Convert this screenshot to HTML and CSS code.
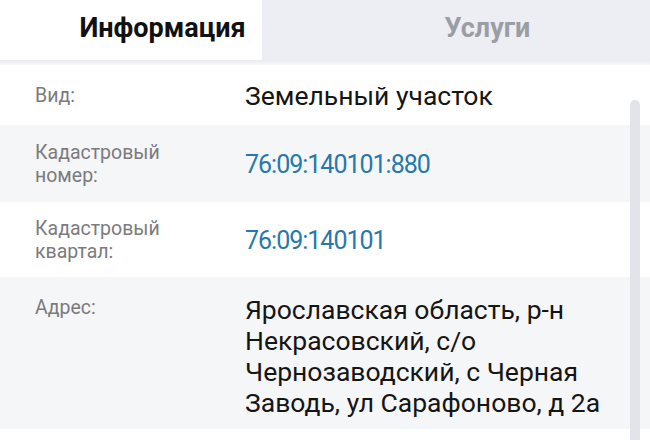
FILE: index.html
```html
<!DOCTYPE html>
<html lang="ru">
<head>
  <meta charset="UTF-8">
  <meta name="viewport" content="width=device-width, initial-scale=1.0">
  <title>Информация</title>
  <link rel="stylesheet" href="styles.css">
</head>
<body>
  <div class="tabs">
    <a href="javascript:;" class="tab cur">Информация</a>
    <a href="javascript:;" class="tab">Услуги</a>
  </div>
  <div class="shade"></div>
  <div class="info">
    <div class="row">
      <div class="label">Вид:</div>
      <div class="value">Земельный участок</div>
    </div>
    <div class="row odd">
      <div class="label">Кадастровый<br>номер:</div>
      <div class="value link">76:09:140101:880</div>
    </div>
    <div class="row">
      <div class="label">Кадастровый<br>квартал:</div>
      <div class="value link">76:09:140101</div>
    </div>
    <div class="row odd top">
      <div class="label">Адрес:</div>
      <div class="value">Ярославская область, р-н Некрасовский, с/о Чернозаводский, с Черная Заводь, ул Сарафоново, д 2а</div>
    </div>
    <!-- полоса прокрутки -->
    <div class="scroll"></div>
  </div>
</body>
</html>
```

FILE: styles.css
```css
*{margin:0;padding:0;box-sizing:border-box;}
body{font-family:Roboto,"Noto Sans",sans-serif;background:#fff;width:650px;height:440px;overflow:hidden;}
a{text-decoration:none;}
.tabs{display:flex;height:60px;background:#eceef3;}
.tab{flex:1;display:flex;align-items:center;justify-content:center;font-size:27px;font-weight:700;color:#9b9da4;padding-bottom:4px;}
/* белая подложка активной вкладки уже самой вкладки */
.tab.cur{color:#111;background:linear-gradient(90deg,#fff 262px,transparent 262px);}
.shade{height:5px;background:linear-gradient(#eaecf0,#f7f8fa);}
.info{position:relative;height:375px;overflow:hidden;}
.row{display:grid;grid-template-columns:210px 1fr;align-items:center;padding:15px 30px 14px 35px;min-height:60px;}
.row.odd{background:#f5f6f8;padding:16px 30px 15px 35px;}
.row.top{align-items:start;padding:17px 30px 11px 35px;}
.row.top .label{padding-top:2px;}
.label{font-size:19.5px;line-height:23px;color:#7a7b7d;}
.value{font-size:26.5px;line-height:31px;color:#151515;}
.value.link{font-size:25px;letter-spacing:-1px;color:#2878ab;}
.scroll{position:absolute;top:35px;right:10px;width:10px;height:340px;background:#e3e4e9;border-radius:5px 5px 0 0;}
```
